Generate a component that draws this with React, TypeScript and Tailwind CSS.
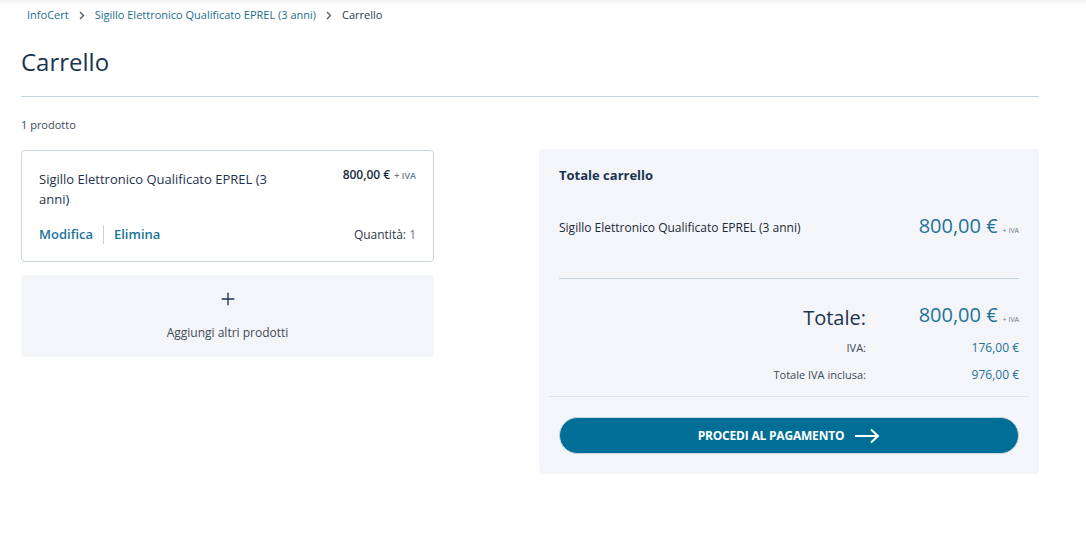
import { Plus } from "lucide-react";

function Chevron() {
  return (
    <svg width="6" height="9" viewBox="0 0 6 9" className="mx-[10px]">
      <path d="M1 1l3.5 3.5L1 8" fill="none" stroke="#4a5a6a" strokeWidth="1.3" />
    </svg>
  );
}

function Iva({ small }: { small?: boolean }) {
  return (
    <span className={small ? "ml-[5px] text-[7px] text-[#6b7785]" : "ml-[4px] text-[9px] text-[#6b7785]"}>+ IVA</span>
  );
}

export default function App() {
  return (
    <div className="min-h-[533px] bg-white text-[#1b3350]" style={{ fontFamily: '"Open Sans", sans-serif' }}>
      {/* Breadcrumb */}
      <div className="shadow-[inset_0_6px_6px_-6px_rgba(0,0,0,0.12)] pl-[27px] pt-[1px] h-[30px] flex items-center text-[11px]">
        <a className="text-[#1a6e8e]">InfoCert</a>
        <Chevron />
        <a className="text-[#1a6e8e]">Sigillo Elettronico Qualificato EPREL (3 anni)</a>
        <Chevron />
        <span className="text-[#2d3a47]">Carrello</span>
      </div>

      <div className="pl-[21px] w-[1039px]">
        <h1 className="text-[24px] leading-[32px] pt-[16px] pb-[18px] text-[#1b3350]">Carrello</h1>
        <div className="h-px bg-[#c5d3dc]" />
        <p className="text-[11px] text-[#3d4a57] mt-[20px] leading-[16px]">1 prodotto</p>

        <div className="flex justify-between mt-[16px]">
          {/* Left column */}
          <div className="w-[413px] flex flex-col">
            <div className="mt-[1px] border border-[#cbd5dd] rounded-[4px] h-[112px] px-[17px] pt-[18px]">
              <div className="flex justify-between">
                <p className="w-[260px] text-[13px] leading-[20px] text-[#1b3350]">
                  Sigillo Elettronico Qualificato EPREL (3 anni)
                </p>
                <p className="text-[12px] leading-[14px] font-semibold text-[#1b2a3a] mt-[-1px]">
                  800,00 €<Iva />
                </p>
              </div>
              <div className="flex justify-between items-center mt-[16px]">
                <div className="flex items-center text-[13px] font-semibold text-[#1a7399]">
                  <span>Modifica</span>
                  <span className="w-px h-[19px] bg-[#c5d3dc] mx-[10px]" />
                  <span>Elimina</span>
                </div>
                <p className="text-[12px] text-[#2d3a47]">
                  Quantità: <span className="text-[#6b7785]">1</span>
                </p>
              </div>
            </div>

            <div className="mt-[13px] bg-[#f4f5f8] rounded-[4px] h-[82px] flex flex-col items-center pt-[14px]">
              <Plus size={20} strokeWidth={1.6} className="text-[#1b3350]" />
              <p className="text-[12px] text-[#3d4a57] mt-[15px]">Aggiungi altri prodotti</p>
            </div>
          </div>

          {/* Right column */}
          <div className="w-[500px] bg-[#f4f5f9] rounded-[4px] pb-[20px]">
            <div className="px-[20px]">
              <h2 className="text-[13px] font-bold text-[#1b3350] pt-[16px] leading-[20px]">Totale carrello</h2>
              <div className="flex justify-between items-center mt-[29px] h-[28px]">
                <p className="text-[12px] text-[#1b2a3a]">Sigillo Elettronico Qualificato EPREL (3 anni)</p>
                <p className="text-[20px] text-[#1f7399] leading-[28px]">
                  800,00 €<Iva small />
                </p>
              </div>
              <div className="h-px bg-[#c5d3dc] mt-[36px]" />

              <div className="grid grid-cols-[1fr_153px] items-center mt-[22px]">
                <p className="text-[20px] text-[#1b3350] text-right leading-[28px]">Totale:</p>
                <p className="text-[20px] text-[#1f7399] text-right leading-[28px]">
                  800,00 €<Iva small />
                </p>
                <p className="text-[11px] text-[#3d4a57] text-right mt-[5px]">IVA:</p>
                <p className="text-[12px] text-[#1f7399] text-right mt-[5px]">176,00 €</p>
                <p className="text-[11px] text-[#3d4a57] text-right mt-[9px]">Totale IVA inclusa:</p>
                <p className="text-[12px] text-[#1f7399] text-right mt-[9px]">976,00 €</p>
              </div>
            </div>
            <div className="h-px bg-[#dfe3e8] mx-[10px] mt-[12px]" />
            <div className="px-[20px] mt-[20px]">
              <button className="w-full h-[37px] rounded-full bg-[#006e96] border border-[#c9d6de] flex items-center justify-center gap-[10px] text-white text-[12px] font-bold tracking-[-0.2px]">
                PROCEDI AL PAGAMENTO
                <svg width="26" height="16" viewBox="0 0 26 16">
                  <path d="M1 8h23M17 1.5L24 8l-7 6.5" fill="none" stroke="white" strokeWidth="2" />
                </svg>
              </button>
            </div>
          </div>
        </div>
      </div>
    </div>
  );
}
